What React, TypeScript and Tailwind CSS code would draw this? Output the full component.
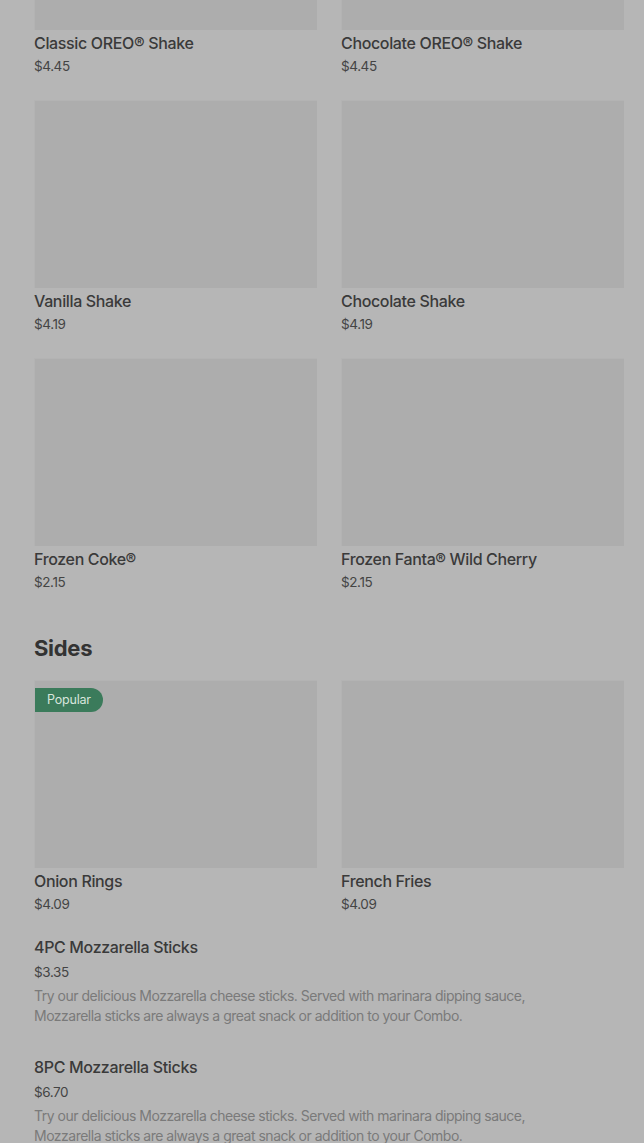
import React from 'react';

type Item = { name: string; price: string; badge?: string };

const shakes: Item[] = [
  { name: 'Classic OREO® Shake', price: '$4.45' },
  { name: 'Chocolate OREO® Shake', price: '$4.45' },
  { name: 'Vanilla Shake', price: '$4.19' },
  { name: 'Chocolate Shake', price: '$4.19' },
  { name: 'Frozen Coke®', price: '$2.15' },
  { name: 'Frozen Fanta® Wild Cherry', price: '$2.15' },
];

const sides: Item[] = [
  { name: 'Onion Rings', price: '$4.09', badge: 'Popular' },
  { name: 'French Fries', price: '$4.09' },
];

const mozzDesc =
  'Try our delicious Mozzarella cheese sticks. Served with marinara dipping sauce, Mozzarella sticks are always a great snack or addition to your Combo.';

const listItems = [
  { name: '4PC Mozzarella Sticks', price: '$3.35', desc: mozzDesc },
  { name: '8PC Mozzarella Sticks', price: '$6.70', desc: mozzDesc },
];

function Card({ item }: { item: Item }) {
  return (
    <div className="flex flex-col">
      <div className="relative h-[188px] bg-[#adadad] border-t border-l border-[#b3b3b3]">
        {item.badge && (
          <span className="absolute left-0 top-[7px] h-[24px] pl-3 pr-3 flex items-center rounded-r-full bg-[#3b7b5b] text-[#d8e6dd] text-[12.5px] tracking-[-0.2px]">
            {item.badge}
          </span>
        )}
      </div>
      <div className="text-[16px] leading-[26px] font-medium tracking-[-0.35px] text-[#3a3a3a]">{item.name}</div>
      <div className="text-[13.5px] leading-[20px] tracking-[-0.4px] text-[#444]">{item.price}</div>
    </div>
  );
}

export default function App() {
  return (
    <div
      className="h-[1143px] w-full overflow-hidden bg-[#b6b6b6]"
      style={{ fontFamily: 'Inter, "Noto Sans", sans-serif' }}
    >
      <div className="-mt-[158px] pl-[34px] pr-[20px]">
        <div className="grid grid-cols-2 gap-x-6 gap-y-6">
          {shakes.map((s) => (
            <Card key={s.name} item={s} />
          ))}
        </div>

        <h2 className="mt-[40px] mb-4 text-[22px] leading-[32px] font-bold text-[#333] tracking-[-0.3px]">Sides</h2>

        <div className="grid grid-cols-2 gap-x-6">
          {sides.map((s) => (
            <Card key={s.name} item={s} />
          ))}
        </div>

        <div className="mt-[21px] flex flex-col gap-[29px]">
          {listItems.map((it) => (
            <div key={it.name} className="flex flex-col">
              <div className="text-[16px] leading-[24px] font-medium tracking-[-0.35px] text-[#3a3a3a]">{it.name}</div>
              <div className="mt-[3px] text-[13.5px] leading-[20px] tracking-[-0.4px] text-[#444]">{it.price}</div>
              <div className="mt-[4px] max-w-[545px] text-[14px] leading-[20px] tracking-[-0.5px] text-[#7a7a7a]">{it.desc}</div>
            </div>
          ))}
        </div>
      </div>
    </div>
  );
}
